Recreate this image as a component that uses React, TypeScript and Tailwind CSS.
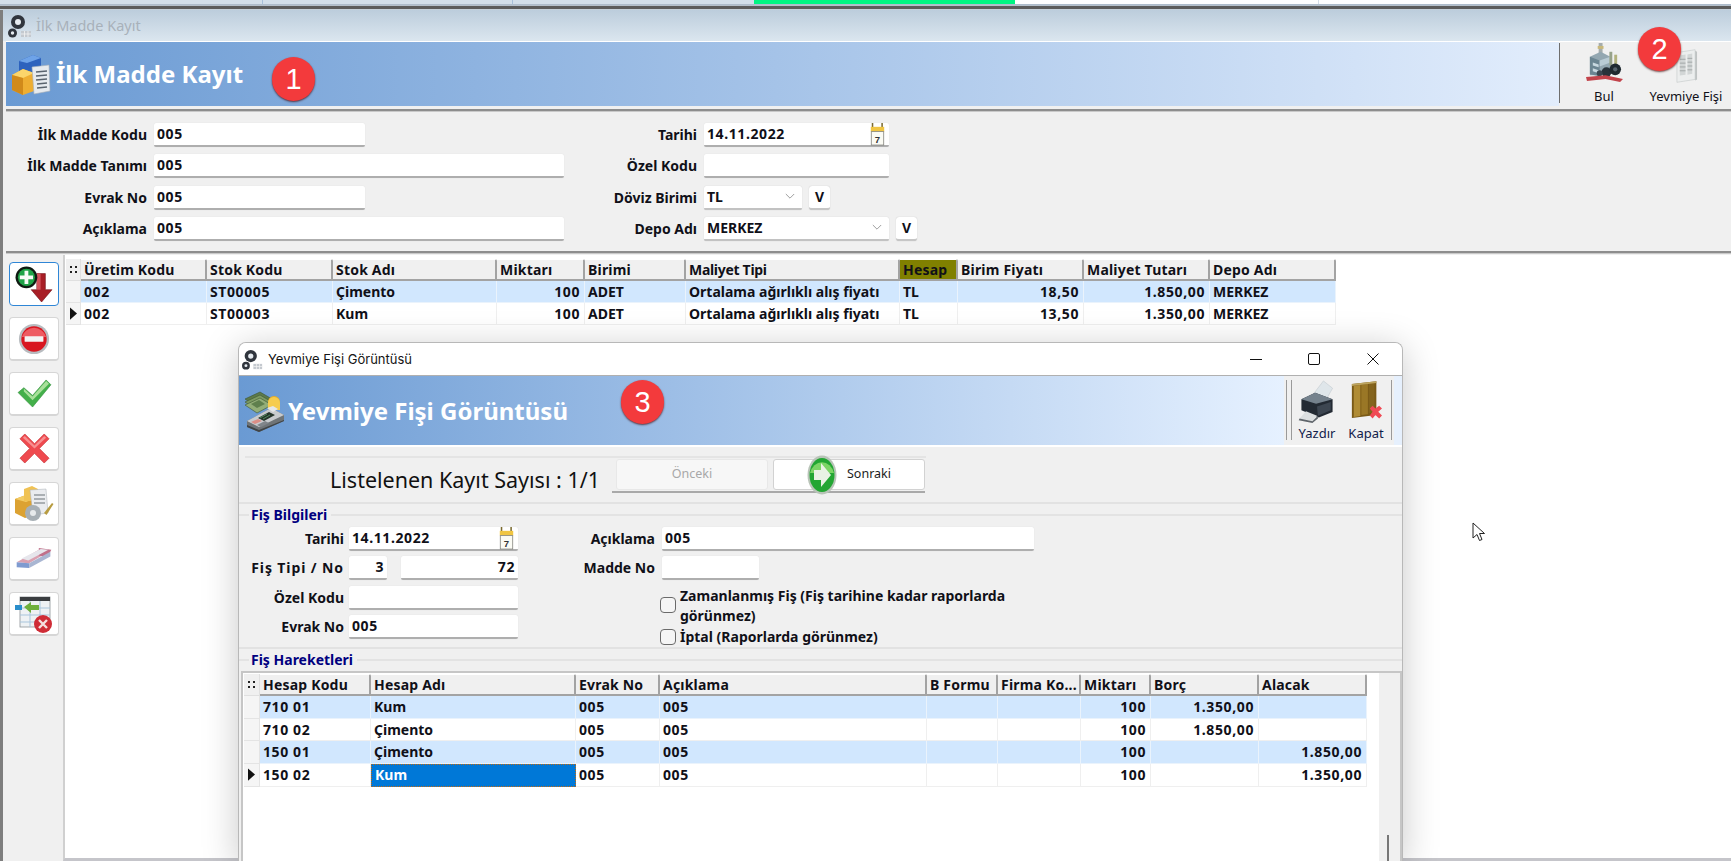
import React from "react";

const Gears = ({ className = "" }: { className?: string }) => (
  <svg viewBox="0 0 24 24" className={className}>
    <circle cx="10" cy="8" r="7" fill="#30353d" />
    <circle cx="10" cy="8" r="3" fill="#e6ebf0" />
    <circle cx="4.500" cy="19" r="4.500" fill="#30353d" />
    <circle cx="4.500" cy="19" r="1.700" fill="#e6ebf0" />
    <rect x="13" y="17" width="10" height="6" fill="#c4c9cf" />
    <path d="M13 20h10M16.500 17v6M20 17v6" stroke="#f4f4f4" strokeWidth="0.8" />
  </svg>
);

const BoxesDoc = ({ className = "" }: { className?: string }) => (
  <svg viewBox="0 0 40 42" className={className}>
    <path d="M8 8l14-6 8 3v14H8z" fill="#2d62bd" />
    <path d="M8 8l14-6 8 3-14 5z" fill="#6ea3e8" />
    <path d="M1 22l11-6 11 4v18l-11 4-11-5z" fill="#eeae32" />
    <path d="M1 22l11-6 11 4-11 5z" fill="#fbd56b" />
    <path d="M1 22l11 3v17l-11-5z" fill="#d18a1a" />
    <path d="M21 14l17-2 1 26-16 3z" fill="#e6eaee" stroke="#a7b0b8" strokeWidth="0.6" />
    <path d="M25 19l11-1M25 23l11-1M25 27l11-1M26 31l10-1M26 35l10-1" stroke="#59636d" strokeWidth="1.300" />
  </svg>
);

const Factory = ({ className = "" }: { className?: string }) => (
  <svg viewBox="0 0 38 40" className={className}>
    <rect x="13" y="0" width="4" height="12" fill="#a4acad" />
    <path d="M12 3h6v3h-6z" fill="#c9b87a" />
    <path d="M4 14l11-5 10 5v19H4z" fill="#93a7b1" />
    <path d="M4 14l10 4v16L4 32z" fill="#6b8592" />
    <path d="M14 18l11-4v6l-11 4z" fill="#b9cbd4" />
    <path d="M7 20l6 2v3l-6-2zM7 26l6 2v3l-6-2z" fill="#c7d8e0" />
    <rect x="24" y="9" width="3" height="14" fill="#97a28a" />
    <rect x="29" y="12" width="3" height="12" fill="#b2b27e" />
    <circle cx="21" cy="30" r="5" fill="#28323a" />
    <circle cx="30" cy="27" r="6" fill="#1f2930" />
    <circle cx="30" cy="27" r="2.200" fill="#56636c" />
    <circle cx="14" cy="31" r="3" fill="#3a4650" />
    <path d="M0 35l20-2 18 4-3 3-15-3L1 39z" fill="#c2434b" />
  </svg>
);

const DocIcon = ({ className = "" }: { className?: string }) => (
  <svg viewBox="0 0 24 36" className={className}>
    <path d="M2 4l19-3v31l-19 3z" fill="#eceeee" stroke="#c8cccc" strokeWidth="0.7" />
    <path d="M5 7l6-1v21l-6 1zM13 6l5-1v21l-5 1z" fill="#d2d6d6" />
    <path d="M5 11h6M5 15h6M5 19h6M5 23h6M13 10h5M13 14h5M13 18h5M13 22h5" stroke="#a1a6a6" strokeWidth="1" />
    <path d="M21 2l2 1v29l-2 1z" fill="#bfc3c3" />
  </svg>
);

const Register = ({ className = "" }: { className?: string }) => (
  <svg viewBox="0 0 42 44" className={className}>
    <path d="M2 10l15-7 12 7-15 8z" fill="#5d7a4a" stroke="#3c5530" strokeWidth="0.6" />
    <path d="M2 13l15-7 12 7-15 8z" fill="#7d9a62" stroke="#3c5530" strokeWidth="0.6" />
    <path d="M2 16l15-7 12 7-15 8z" fill="#93ae78" stroke="#3c5530" strokeWidth="0.6" />
    <path d="M8 15l8-4 6 4-8 4z" fill="#5f7f4d" />
    <circle cx="31" cy="13" r="6" fill="#e9ae22" />
    <path d="M25 14a6 6 0 0 1 12 0v7H25z" fill="#f6cc4e" />
    <path d="M4 32l24-13 13 7v6L16 43 4 38z" fill="#6f7477" />
    <path d="M4 32l24-13 13 7-25 12z" fill="#c8cbce" />
    <path d="M24 19l6-2 5 3-5 3z" fill="#e5e7e8" />
    <path d="M15 29l11-6 6 3-11 6z" fill="#26352b" />
    <path d="M17 29l7-4M20 30l7-4" stroke="#5aa06a" strokeWidth="0.8" />
    <path d="M8 33l7-3 4 2-7 3z" fill="#dc8f87" />
    <path d="M14 36l8-4 4 2-8 4z" fill="#80858a" />
    <path d="M4 38l12 5 25-11v-1L16 41 4 36z" fill="#3f4447" />
  </svg>
);

const Printer = ({ className = "" }: { className?: string }) => (
  <svg viewBox="0 0 40 48" className={className}>
    <path d="M14 18L27 1l10 8-8 14z" fill="#dfe6ea" stroke="#b7c0c6" strokeWidth="0.5" />
    <path d="M3 21l15-7 19 7v14l-15 6-19-8z" fill="#232a33" />
    <path d="M3 21l15-7 19 7-18 5z" fill="#75828d" />
    <path d="M20 29l15-5v9l-14 6z" fill="#3d4651" />
    <path d="M8 34l12 5-5 6-14-3z" fill="#dcdfe0" />
    <path d="M1 42l14 3 6-6v3l-6 5-15-3z" fill="#5f656b" />
  </svg>
);

const Door = ({ className = "" }: { className?: string }) => (
  <svg viewBox="0 0 34 44" className={className}>
    <path d="M2 4l26-3v36L2 40z" fill="#7a5a17" />
    <path d="M4 6l7-1v33l-7 1z" fill="#b08c34" />
    <path d="M12 5l7-1v32l-7 1z" fill="#9a7726" />
    <path d="M20 4l6-1v31l-6 1z" fill="#84641d" />
    <path d="M2 4l26-3v2L2 6z" fill="#bda45e" />
    <path d="M21 30l3-3 3 3 4-3 3 3-4 3.500 4 4-3 3-4-3.500-3 3.500-3-3 3-4z" fill="#f04a55" />
  </svg>
);

const Calendar = ({ className = "" }: { className?: string }) => (
  <svg viewBox="0 0 16 24" className={className}>
    <rect x="2" y="0" width="1.600" height="5" fill="#7a6a30" />
    <rect x="12" y="0" width="1.600" height="5" fill="#7a6a30" />
    <rect x="1" y="4" width="14" height="5" fill="#f0c542" />
    <rect x="1.500" y="9" width="13" height="14" fill="#fbfbf4" stroke="#7e7e78" strokeWidth="0.8" />
    <text x="8" y="20.500" textAnchor="middle" fontSize="10" fontWeight="700" fontFamily="'Liberation Sans', sans-serif" fill="#333">7</text>
  </svg>
);

const PlusArrow = () => (
  <svg viewBox="0 0 40 38" className="w-[38px] h-[36px]">
    <path d="M23 8h9v17h7l-11 13-11-13h6z" fill="#a81e26" stroke="#6e1016" strokeWidth="0.6" />
    <path d="M23 8h4v17h-4z" fill="#d2505a" />
    <circle cx="12" cy="12" r="11.500" fill="#0f1a12" />
    <circle cx="12" cy="12" r="9" fill="#1fa347" />
    <path d="M10 5h4v5h5v4h-5v5h-4v-5H5v-4h5z" fill="#f6fbf6" />
  </svg>
);

const MinusIcon = () => (
  <svg viewBox="0 0 34 34" className="w-[32px] h-[32px]">
    <circle cx="17" cy="17" r="16" fill="#b8bcc0" />
    <circle cx="17" cy="17" r="13.500" fill="#d81620" />
    <path d="M4 15a13.500 13.500 0 0 1 26 0z" fill="#ee5b62" />
    <rect x="7" y="14" width="20" height="6" rx="1" fill="#f4f4f4" />
  </svg>
);

const CheckIcon = () => (
  <svg viewBox="0 0 36 30" className="w-[35px] h-[29px]">
    <path d="M1 14l6-5 9 8L30 1l5 5-19 23z" fill="#43b04a" stroke="#2c8a35" strokeWidth="0.6" />
    <path d="M7 10l9 8L30 2l3 3-17 17-9-9z" fill="#a8e09a" />
  </svg>
);

const XIcon = () => (
  <svg viewBox="0 0 32 32" className="w-[31px] h-[31px]">
    <path d="M6 1l10 10L26 1l5 5-10 10 10 10-5 5-10-10L6 31l-5-5 10-10L1 6z" fill="#ef4a4f" stroke="#c83237" strokeWidth="0.7" />
    <path d="M6 3l10 10L26 3l2 2-12 11L4 5z" fill="#f88f90" />
  </svg>
);

const BoxesGear = () => (
  <svg viewBox="0 0 40 38" className="w-[40px] h-[38px]">
    <path d="M1 14l11-4 10 3v17l-11 3-10-5z" fill="#dca232" />
    <path d="M1 14l11-4 10 3-10 4z" fill="#f3cc66" />
    <path d="M10 4l8-3 6 3v12H10z" fill="#f0c254" />
    <path d="M16 5l16-1 2 24-15 2z" fill="#eaecef" stroke="#a8aeb5" strokeWidth="0.5" />
    <path d="M20 10h11M20 14h11M20 18h11" stroke="#6a7279" strokeWidth="1.200" />
    <circle cx="19" cy="28" r="8" fill="#a7afb5" />
    <circle cx="19" cy="28" r="3" fill="#e7eaec" />
    <path d="M30 28l8-10 1.500 1-7 11z" fill="#b89c40" />
  </svg>
);

const Eraser = () => (
  <svg viewBox="0 0 38 26" className="w-[38px] h-[25px]">
    <path d="M1 17L24 4l12 1-22 13z" fill="#d9a0b0" />
    <path d="M24 2l13 2-4 8-9-2z" fill="#c0708a" />
    <path d="M1 17l13 1v5L1 22z" fill="#7f9bd0" />
    <path d="M14 18L36 6v5L14 23z" fill="#a9b6d2" />
    <path d="M6 13L26 3l8 1-21 11z" fill="#e6e6ec" />
  </svg>
);

const TableX = () => (
  <svg viewBox="0 0 38 38" className="w-[38px] h-[38px]">
    <rect x="5" y="2" width="30" height="30" fill="#eef2f4" stroke="#8d9397" strokeWidth="0.8" />
    <rect x="5" y="2" width="30" height="4" fill="#3a3d40" />
    <path d="M5 13h30M5 20h30M5 27h30M15 6v26M25 6v26" stroke="#a8c5dc" strokeWidth="1" />
    <rect x="0" y="10" width="7" height="5" fill="#2a8ecb" />
    <path d="M9 12l7-5v3h8v5h-8v3z" fill="#6eb03c" />
    <circle cx="28" cy="29" r="9" fill="#cf2c36" />
    <path d="M24 25l8 8M32 25l-8 8" stroke="#f5dede" strokeWidth="2.400" />
  </svg>
);

const GreenArrow = () => (
  <svg viewBox="0 0 30 40" className="w-[30px] h-[40px]">
    <ellipse cx="15" cy="20" rx="14.500" ry="19.500" fill="#b9c4b8" />
    <ellipse cx="15" cy="20" rx="12.500" ry="17" fill="#23a633" />
    <path d="M3 18a12.500 15 0 0 1 24 0z" fill="#7bd465" />
    <path d="M7 15h7V8l10 12-10 12v-7H7z" fill="#e9f2e4" />
  </svg>
);

const Badge = ({ n, className }: { n: string; className: string }) => (
  <div
    className={`absolute w-[43px] h-[44px] rounded-full bg-[#f33a3c] shadow-[0_1px_2px_rgba(60,0,0,0.7)] flex items-center justify-center text-white text-[29px] font-normal font-['Liberation_Sans',sans-serif] leading-none ${className}`}
  >
    {n}
  </div>
);

const num = (v: string) => /^[\dST.,\s]+$/.test(v);

const Input = ({ w, value = "", right = false, children }: { w: string; value?: string; right?: boolean; children?: React.ReactNode }) => (
  <div className={`${w} h-[24px] bg-white rounded-[2px] border-b-2 border-[#aeaeae] shadow-[0_0_1px_rgba(0,0,0,0.12)] flex items-center px-[3px] leading-none`}>
    <span className={`flex-1 whitespace-pre ${right ? "text-right" : "text-left"} ${num(value) ? "tracking-[0.6px]" : ""}`}>{value}</span>
    {children}
  </div>
);

const Select = ({ w, value }: { w: string; value: string }) => (
  <div className={`${w} h-[24px] bg-white rounded-[2px] border-b-2 border-[#c2c2c2] shadow-[0_0_1px_rgba(0,0,0,0.2)] flex items-center justify-between px-[3px]`}>
    <span>{value}</span>
    <svg viewBox="0 0 12 8" className="w-[10px] h-[7px] mr-[4px]">
      <path d="M1 1l5 5 5-5" fill="none" stroke="#8a8a8a" strokeWidth="1" />
    </svg>
  </div>
);

const VBtn = () => (
  <div className="w-[21px] h-[24px] bg-white rounded-[3px] border-b-2 border-[#c6c6c6] shadow-[0_0_1px_rgba(0,0,0,0.25)] flex items-center justify-center">V</div>
);

const Field = ({ label, labelW, gap = "gap-[7px]", wide = false, children }: { label: string; labelW: string; gap?: string; wide?: boolean; children: React.ReactNode }) => (
  <div className={`flex items-center h-[24px] ${gap}`}>
    <div className={`${labelW} text-right whitespace-nowrap shrink-0 ${wide ? "tracking-[0.9px]" : ""}`}>{label}</div>
    {children}
  </div>
);

const Tri = () => (
  <svg viewBox="0 0 8 14" className="w-[7px] h-[13px]">
    <path d="M0 0l8 7-8 7z" fill="#111" />
  </svg>
);

const Dots = () => (
  <div className="grid grid-cols-2 gap-x-[3px] gap-y-[3px] w-[7px]">
    <i className="w-[2px] h-[2px] bg-[#222]" />
    <i className="w-[2px] h-[2px] bg-[#222]" />
    <i className="w-[2px] h-[2px] bg-[#222]" />
    <i className="w-[2px] h-[2px] bg-[#222]" />
  </div>
);

type Row = { cells: string[]; active?: boolean; tint?: boolean };

const HeadCell = ({ label, hl }: { label: string; hl?: boolean }) => (
  <div className={`h-full border-r-2 border-b-2 border-[#a3a3a3] border-t border-t-white px-[3px] flex items-center whitespace-nowrap overflow-hidden rounded-tr-[2px] ${hl ? "bg-[#808000]" : "bg-[#f0f0f0]"} ${label === "Maliyet Tipi" ? "tracking-[-0.3px]" : "tracking-[0.2px]"}`}>
    {label}
  </div>
);

const Cell = ({ v, right, tint, sel }: { v: string; right?: boolean; tint?: boolean; sel?: boolean }) => (
  <div
    className={`h-full px-[3px] flex items-center whitespace-nowrap overflow-hidden border-r border-b ${right ? "justify-end pr-[4px]" : ""} ${
      sel ? "bg-[#0078d7] text-white border border-dotted border-[#c46a10]" : tint ? "bg-[#d1e7fe] border-[#eaf3fc]" : "bg-white border-[#efefef]"
    } ${num(v) ? "tracking-[0.6px]" : ""}`}
  >
    {v}
  </div>
);

const mainCols = "grid grid-cols-[15px_126px_126px_164px_88px_101px_214px_58px_126px_126px_126px] h-[22px]";
const dlgHeadCols = "grid grid-cols-[16px_111px_205px_84px_267px_71px_83px_70px_108px_108px] h-[22px]";
const dlgCols = "grid grid-cols-[16px_111px_205px_84px_267px_71px_83px_70px_108px_108px] h-[22.700px]";

const mainHead = ["Üretim Kodu", "Stok Kodu", "Stok Adı", "Miktarı", "Birimi", "Maliyet Tipi", "Hesap", "Birim Fiyatı", "Maliyet Tutarı", "Depo Adı"];
const mainRight = [3, 7, 8];
const mainRows: Row[] = [
  { cells: ["002", "ST00005", "Çimento", "100", "ADET", "Ortalama ağırlıklı alış fiyatı", "TL", "18,50", "1.850,00", "MERKEZ"], tint: true },
  { cells: ["002", "ST00003", "Kum", "100", "ADET", "Ortalama ağırlıklı alış fiyatı", "TL", "13,50", "1.350,00", "MERKEZ"], active: true },
];

const dlgHead = ["Hesap Kodu", "Hesap Adı", "Evrak No", "Açıklama", "B Formu", "Firma Ko...", "Miktarı", "Borç", "Alacak"];
const dlgRight = [6, 7, 8];
const dlgRows: Row[] = [
  { cells: ["710 01", "Kum", "005", "005", "", "", "100", "1.350,00", ""], tint: true },
  { cells: ["710 02", "Çimento", "005", "005", "", "", "100", "1.850,00", ""] },
  { cells: ["150 01", "Çimento", "005", "005", "", "", "100", "", "1.850,00"], tint: true },
  { cells: ["150 02", "Kum", "005", "005", "", "", "100", "", "1.350,00"], active: true },
];

const ToolBtn = ({ children, active }: { children: React.ReactNode; active?: boolean }) => (
  <div className={`w-[50px] h-[44px] rounded-[4px] bg-white flex items-center justify-center border ${active ? "border-[#2f86d6]" : "border-[#d6d6d6] border-b-2"}`}>
    {children}
  </div>
);

const DoubleLine = () => (
  <div className="h-[3px] bg-[#8d8d8d] border-b border-[#c9c9c9] shrink-0" />
);

const SectionTitle = ({ label, h }: { label: string; h: string }) => (
  <div className={`flex items-center ${h} shrink-0`}>
    <div className="w-[10px] h-[2px] bg-[#e3e3e3]" />
    <span className="mx-[2px] text-[#00007f] font-bold text-[14px]">{label}</span>
    <div className="flex-1 h-[2px] bg-[#e3e3e3] ml-[2px]" />
  </div>
);

export default function App() {
  return (
    <div className="relative w-[1731px] h-[861px] overflow-hidden bg-[#f0f0f0] flex flex-col font-['Noto_Sans',sans-serif] text-[14px] font-bold text-[#101018] leading-none">
      {/* browser tab strip */}
      <div className="h-[5px] flex shrink-0 border-b border-[#aebccb]">
        <div className="w-[263px] bg-[#d3dfea] border-r border-[#a8c0da]" />
        <div className="w-[250px] bg-[#d3dfea] border-r border-[#a8c0da]" />
        <div className="w-[241px] bg-[#d3dfea]" />
        <div className="w-[261px] bg-[#00f582]" />
        <div className="w-[304px] bg-white border-r border-[#d5dee8]" />
        <div className="flex-1 bg-white" />
      </div>
      <div className="h-[1px] bg-[#b5c0cb] shrink-0" />
      <div className="h-[3px] bg-[#5c5c5c] shrink-0" />
      <div className="h-[1px] bg-[#c4d0da] shrink-0" />

      {/* main window */}
      <div className="flex-1 flex flex-col border-l-[3px] border-[#7e7e7e] min-h-0">
        <div className="flex-1 flex flex-col pl-[3px] min-h-0">
          <div className="h-[31px] shrink-0 -ml-[3px] pl-[5px] bg-gradient-to-b from-[#bccddc] to-[#dbe6ef] flex items-center gap-[4px]">
            <Gears className="w-[24px] h-[24px]" />
            <span className="text-[#a8b1ba] font-normal text-[14.500px]">İlk Madde Kayıt</span>
          </div>
          <div className="h-[1px] bg-white shrink-0" />
          {/* header band */}
          <div className="h-[64px] flex shrink-0">
            <div className="flex-1 flex items-center bg-gradient-to-r from-[#6a9ad3] to-[#e2edfc]">
              <BoxesDoc className="w-[40px] h-[42px] ml-[5px]" />
              <span className="ml-[5px] text-white font-bold text-[24px]">İlk Madde Kayıt</span>
            </div>
            <div className="w-[172px] flex pt-[1px]">
              <div className="w-[1px] h-[60px] bg-[#6e6e6e]" />
              <div className="w-[88px] flex flex-col items-center">
                <Factory className="w-[37px] h-[39px]" />
                <span className="mt-[8px] font-normal text-[13px]">Bul</span>
              </div>
              <div className="w-[76px] flex flex-col items-center">
                <DocIcon className="w-[23px] h-[36px] mt-[5px]" />
                <span className="mt-[6px] font-normal text-[13px] whitespace-nowrap">Yevmiye Fişi</span>
              </div>
            </div>
          </div>
          <div className="h-[3px] shrink-0" />
          <DoubleLine />
          {/* form */}
          <div className="h-[139px] flex pt-[11px] shrink-0">
            <div className="w-[559px] flex flex-col gap-[7.300px]">
              <Field label="İlk Madde Kodu" labelW="w-[141px]"><Input w="w-[211px]" value="005" /></Field>
              <Field label="İlk Madde Tanımı" labelW="w-[141px]"><Input w="w-[410px]" value="005" /></Field>
              <Field label="Evrak No" labelW="w-[141px]"><Input w="w-[211px]" value="005" /></Field>
              <Field label="Açıklama" labelW="w-[141px]"><Input w="w-[410px]" value="005" /></Field>
            </div>
            <div className="flex flex-col gap-[7.300px]">
              <Field label="Tarihi" labelW="w-[132px]">
                <Input w="w-[185px]" value="14.11.2022"><Calendar className="w-[17px] h-[23px]" /></Input>
              </Field>
              <Field label="Özel Kodu" labelW="w-[132px]"><Input w="w-[185px]" /></Field>
              <Field label="Döviz Birimi" labelW="w-[132px]">
                <Select w="w-[98px]" value="TL" />
                <VBtn />
              </Field>
              <Field label="Depo Adı" labelW="w-[132px]">
                <Select w="w-[185px]" value="MERKEZ" />
                <VBtn />
              </Field>
            </div>
          </div>
          <DoubleLine />
          {/* body */}
          <div className="flex-1 flex min-h-0 pt-[1px]">
            <div className="w-[57px] shrink-0 flex flex-col gap-[11px] pl-[3px] pt-[7px]">
              <ToolBtn active><PlusArrow /></ToolBtn>
              <ToolBtn><MinusIcon /></ToolBtn>
              <ToolBtn><CheckIcon /></ToolBtn>
              <ToolBtn><XIcon /></ToolBtn>
              <ToolBtn><BoxesGear /></ToolBtn>
              <ToolBtn><Eraser /></ToolBtn>
              <ToolBtn><TableX /></ToolBtn>
            </div>
            <div className="flex-1 bg-white border-l-2 border-[#d0d0d0] pt-[4px] pl-[1px] border-b-[3px] border-b-[#c5c5ca]">
              <div className={mainCols}>
                <div className="bg-[#f0f0f0] border-r border-b border-[#e0e0e0] flex items-center justify-center"><Dots /></div>
                {mainHead.map((h) => <HeadCell key={h} label={h} hl={h === "Hesap"} />)}
              </div>
              {mainRows.map((r, i) => (
                <div key={i} className={mainCols}>
                  <div className="bg-[#f5f5f5] border-r border-b border-[#e4e4e4] flex items-center justify-center">{r.active && <Tri />}</div>
                  {r.cells.map((c, j) => <Cell key={j} v={c} right={mainRight.includes(j)} tint={r.tint} />)}
                </div>
              ))}
            </div>
          </div>
        </div>
      </div>

      <Badge n="1" className="left-[272px] top-[57px]" />
      <Badge n="2" className="left-[1638px] top-[27px]" />

      {/* dialog window */}
      <div className="absolute left-[238px] top-[342px] bottom-0 w-[1165px] bg-[#f0f0f0] rounded-t-[8px] border border-[#b8b8b8] border-b-0 shadow-[0_6px_36px_rgba(0,0,0,0.22)] flex flex-col overflow-hidden">
        <div className="h-[32px] bg-white flex items-center shrink-0 pl-[3px]">
          <Gears className="w-[21px] h-[23px]" />
          <span className="ml-[5px] font-normal text-[13px] font-['Inter',sans-serif] text-[#151515]">Yevmiye Fişi Görüntüsü</span>
          <div className="flex-1" />
          <svg viewBox="0 0 12 12" className="w-[12px] h-[12px]"><path d="M0 6.500h12" stroke="#111" strokeWidth="1" /></svg>
          <svg viewBox="0 0 12 12" className="w-[12px] h-[12px] ml-[46px]"><rect x="0.500" y="0.500" width="11" height="11" rx="1.500" fill="none" stroke="#111" strokeWidth="1" /></svg>
          <svg viewBox="0 0 12 12" className="w-[12px] h-[12px] ml-[47px] mr-[23px]"><path d="M0.500 0.500l11 11M11.500 0.500l-11 11" stroke="#111" strokeWidth="1" /></svg>
        </div>
        <div className="h-[1px] bg-[#b0b0b0] shrink-0" />
        <div className="h-[69px] flex shrink-0 bg-[#e6f0fd]">
          <div className="w-[1045px] flex items-center bg-gradient-to-r from-[#6a9ad3] to-[#e6f1ff]">
            <Register className="w-[42px] h-[44px] ml-[4px]" />
            <span className="ml-[3px] text-white font-bold text-[24px]">Yevmiye Fişi Görüntüsü</span>
          </div>
          <div className="w-[110px] bg-[#f0f0f0] flex items-start pt-[4px]">
            <div className="h-[60px] w-[6px] border-x border-[#9a9a9a] ml-[2px] shrink-0" />
            <div className="w-[50px] flex flex-col items-center font-normal text-[13px] text-[#10204a]">
              <Printer className="w-[40px] h-[44px]" />
              <span className="mt-[3px]">Yazdır</span>
            </div>
            <div className="w-[48px] flex flex-col items-center font-normal text-[13px] text-[#10204a]">
              <Door className="w-[32px] h-[42px]" />
              <span className="mt-[5px]">Kapat</span>
            </div>
            <div className="h-[60px] w-[1px] bg-[#9a9a9a] ml-[1px]" />
          </div>
        </div>
        <div className="h-[2px] bg-white shrink-0" />
        {/* nav */}
        <div className="h-[57px] shrink-0 border-b-2 border-[#e2e2e2]">
          <div className="h-[9px]" />
          <div className="ml-[6px] w-[681px] border-t-2 border-[#e4e4e4] flex">
            <div className="w-[355px] shrink-0 text-right font-normal text-[21.500px] text-[#111] pt-[11px] leading-none whitespace-nowrap">Listelenen Kayıt Sayısı : 1/1</div>
            <div className="ml-[12px] flex gap-[5px] py-[1px] pl-[4px] border-b-2 border-[#a9a9a9]">
              <div className="w-[152px] h-[31px] rounded-[3px] bg-[#f7f7f7] border border-[#e8e8e8] flex items-center justify-center font-normal text-[12.500px] text-[#a8a8a8]">Önceki</div>
              <div className="w-[152px] h-[31px] rounded-[3px] bg-white border border-[#d2d2d2] flex items-center justify-center gap-[10px] font-normal text-[12.500px] text-[#1c1c1c]">
                <GreenArrow />
                <span>Sonraki</span>
              </div>
            </div>
          </div>
        </div>
        <SectionTitle label="Fiş Bilgileri" h="h-[22px]" />
        {/* fields */}
        <div className="h-[123px] flex shrink-0 border-b-2 border-[#e2e2e2]">
          <div className="w-[279px] flex flex-col gap-[5.400px] pt-[1px]">
            <Field label="Tarihi" labelW="w-[105px]" gap="gap-[5px]">
              <Input w="w-[169px]" value="14.11.2022"><Calendar className="w-[17px] h-[23px]" /></Input>
            </Field>
            <Field label="Fiş Tipi / No" labelW="w-[105px]" gap="gap-[5px]" wide>
              <div className="flex gap-[14px]">
                <Input w="w-[38px]" value="3" right />
                <Input w="w-[117px]" value="72" right />
              </div>
            </Field>
            <Field label="Özel Kodu" labelW="w-[105px]" gap="gap-[5px]"><Input w="w-[169px]" /></Field>
            <Field label="Evrak No" labelW="w-[105px]" gap="gap-[5px]"><Input w="w-[169px]" value="005" /></Field>
          </div>
          <div className="flex flex-col pt-[1px] gap-[5px]">
            <Field label="Açıklama" labelW="w-[137px]"><Input w="w-[372px]" value="005" /></Field>
            <Field label="Madde No" labelW="w-[137px]"><Input w="w-[97px]" /></Field>
            <div className="ml-[142px] flex gap-[4px] mt-[1px]">
              <div className="w-[16px] h-[16px] mt-[11px] rounded-[4px] border border-[#6a6a6a] bg-[#f5f5f5] shrink-0" />
              <div className="w-[350px] leading-[20px]">Zamanlanmış Fiş (Fiş tarihine kadar raporlarda görünmez)</div>
            </div>
            <div className="ml-[142px] flex items-center gap-[4px] -mt-[4px]">
              <div className="w-[16px] h-[16px] rounded-[4px] border border-[#6a6a6a] bg-[#f5f5f5] shrink-0" />
              <div className="leading-[20px]">İptal (Raporlarda görünmez)</div>
            </div>
          </div>
        </div>
        <SectionTitle label="Fiş Hareketleri" h="h-[22px]" />
        {/* grid */}
        <div className="flex-1 flex ml-[2px] bg-white border-t-2 border-x-2 border-[#c6c6c6] min-h-0">
          <div className="w-[1136px] pt-[1px] pl-[1px]">
            <div className={dlgHeadCols}>
              <div className="bg-[#f0f0f0] border-r border-b border-[#e0e0e0] flex items-center justify-center"><Dots /></div>
              {dlgHead.map((h) => <HeadCell key={h} label={h} />)}
            </div>
            {dlgRows.map((r, i) => (
              <div key={i} className={dlgCols}>
                <div className="bg-[#f5f5f5] border-r border-b border-[#e4e4e4] flex items-center justify-center">{r.active && <Tri />}</div>
                {r.cells.map((c, j) => <Cell key={j} v={c} right={dlgRight.includes(j)} tint={r.tint} sel={r.active && j === 1} />)}
              </div>
            ))}
          </div>
          <div className="flex-1 bg-[#f0f0f0] flex flex-col justify-end pl-[8px]">
            <div className="w-[2px] h-[26px] bg-[#777]" />
          </div>
        </div>
      </div>

      {/* mouse pointer */}
      <svg viewBox="0 0 13 20" className="absolute left-[1472px] top-[522px] w-[13px] h-[20px]">
        <path d="M1 1v15l4-3.500 2.500 6 2.500-1-2.500-6h5z" fill="#fff" stroke="#222" strokeWidth="1" />
      </svg>

      <Badge n="3" className="left-[621px] top-[380px]" />
    </div>
  );
}
